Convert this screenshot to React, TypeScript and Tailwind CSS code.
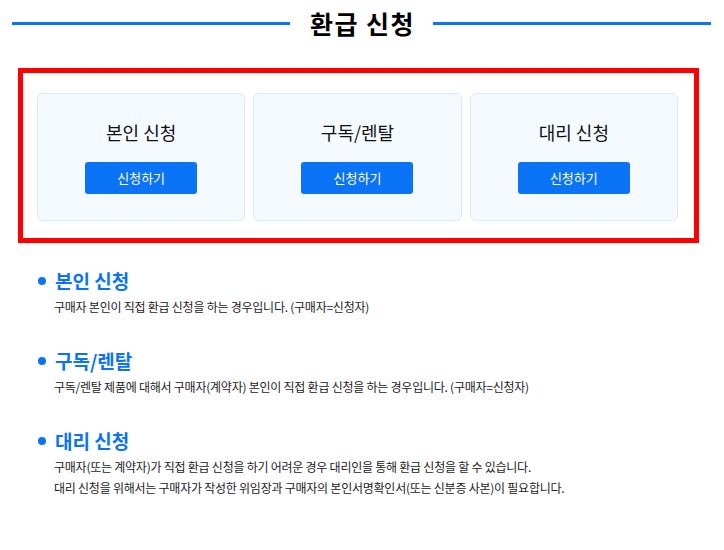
import React from "react";

const font = { fontFamily: '"Noto Sans CJK KR", "Noto Sans", sans-serif' };

function Card({ title }: { title: string }) {
  return (
    <div className="flex h-[128px] flex-col items-center rounded-[6px] border border-[#d9e9fb] bg-[#f4faff] pt-[25px]">
      <div className="h-[26px] text-[18px] leading-[26px] text-[#111]">{title}</div>
      <button className="mt-[17px] h-[32px] w-[112px] rounded-[3px] bg-[#0b74f6] text-[13px] leading-[32px] text-white">
        신청하기
      </button>
    </div>
  );
}

function Section({ title, lines }: { title: string; lines: string[] }) {
  return (
    <div className="mb-[30px]">
      <div className="flex h-[28px] items-center">
        <span className="mr-[9px] h-[8px] w-[8px] rounded-full bg-[#0b74f6]" />
        <span className="text-[19px] font-bold leading-[28px] text-[#0b74f6]">{title}</span>
      </div>
      <div className="ml-[16px] mt-[1px]">
        {lines.map((l, i) => (
          <div key={i} className="text-[12px] leading-[21px] tracking-[-0.02em] text-[#222]">
            {l}
          </div>
        ))}
      </div>
    </div>
  );
}

export default function App() {
  return (
    <div className="h-[550px] w-[724px] bg-white" style={font}>
      <div className="flex h-[46px] items-center gap-[20px] pl-[12px] pr-[13px]">
        <div className="h-[3px] flex-1 bg-[#0b74f6]" />
        <h1 className="-mr-[2px] text-[25px] font-bold leading-[30px] tracking-[0.06em] text-black">환급 신청</h1>
        <div className="h-[3px] flex-1 bg-[#0b74f6]" />
      </div>
      <div className="ml-[18px] mt-[22px] grid w-[681px] grid-cols-3 gap-[8px] border-[5px] border-[#ff0000] pb-[17px] pl-[14px] pr-[16px] pt-[20px]">
        <Card title="본인 신청" />
        <Card title="구독/렌탈" />
        <Card title="대리 신청" />
      </div>
      <div className="mt-[24px] pl-[38px]">
        <Section title="본인 신청" lines={["구매자 본인이 직접 환급 신청을 하는 경우입니다. (구매자=신청자)"]} />
        <Section
          title="구독/렌탈"
          lines={["구독/렌탈 제품에 대해서 구매자(계약자) 본인이 직접 환급 신청을 하는 경우입니다. (구매자=신청자)"]}
        />
        <Section
          title="대리 신청"
          lines={[
            "구매자(또는 계약자)가 직접 환급 신청을 하기 어려운 경우 대리인을 통해 환급 신청을 할 수 있습니다.",
            "대리 신청을 위해서는 구매자가 작성한 위임장과 구매자의 본인서명확인서(또는 신분증 사본)이 필요합니다.",
          ]}
        />
      </div>
    </div>
  );
}
